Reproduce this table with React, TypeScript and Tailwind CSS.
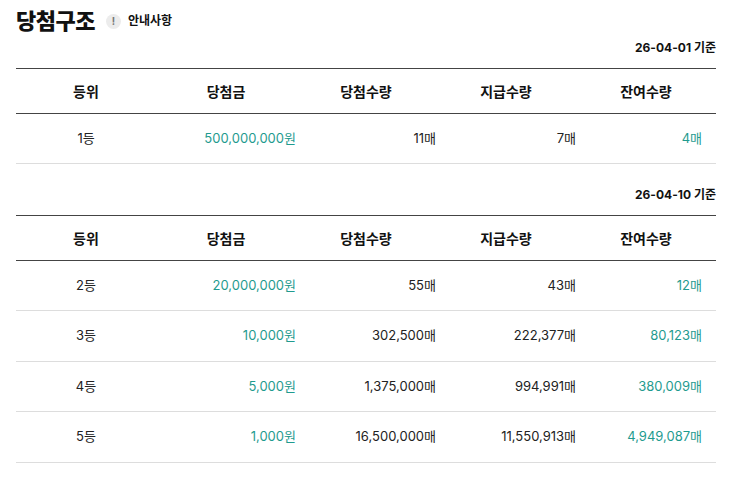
import React from "react";

const font = { fontFamily: "Inter, 'Noto Sans CJK KR', sans-serif" };

type Row = { rank: string; prize: string; win: string; paid: string; left: string };

const Table = ({ rows }: { rows: Row[] }) => (
  <div className="w-[700px]">
    <div className="grid grid-cols-5 h-[46px] items-center border-t border-b border-[#444] text-[14px] font-bold text-[#111]">
      <div className="text-center">등위</div>
      <div className="text-center">당첨금</div>
      <div className="text-center">당첨수량</div>
      <div className="text-center">지급수량</div>
      <div className="text-center">잔여수량</div>
    </div>
    {rows.map((r, i) => (
      <div
        key={r.rank}
        className={`grid grid-cols-5 items-center border-b border-[#dddddd] text-[13px] text-[#222] ${i % 2 === 1 ? "h-[51px]" : "h-[50px]"}`}
      >
        <div className="text-center">{r.rank}</div>
        <div className="text-right text-[#1f9b8f]">{r.prize}</div>
        <div className="text-right">{r.win}</div>
        <div className="text-right">{r.paid}</div>
        <div className="text-right pr-[14px] text-[#1f9b8f]">{r.left}</div>
      </div>
    ))}
  </div>
);

export default function App() {
  return (
    <div className="bg-white w-[734px] h-[486px] pl-[16px] pt-[6px]" style={font}>
      <div className="flex items-center h-[30px]">
        <span className="text-[22px] font-black text-[#111] tracking-[-0.5px]">당첨구조</span>
        <span className="ml-[11px] w-[15px] h-[15px] rounded-full bg-[#ececec] flex items-center justify-center text-[10px] font-bold text-[#777]">!</span>
        <span className="ml-[7px] text-[12px] font-semibold text-[#111]">안내사항</span>
      </div>
      <div className="w-[700px] text-right text-[12px] font-bold text-[#111] leading-[18px] mt-[3px] mb-[11px]">26-04-01 기준</div>
      <Table rows={[{ rank: "1등", prize: "500,000,000원", win: "11매", paid: "7매", left: "4매" }]} />
      <div className="w-[700px] text-right text-[12px] font-bold text-[#111] leading-[18px] mt-[22px] mb-[11px]">26-04-10 기준</div>
      <Table
        rows={[
          { rank: "2등", prize: "20,000,000원", win: "55매", paid: "43매", left: "12매" },
          { rank: "3등", prize: "10,000원", win: "302,500매", paid: "222,377매", left: "80,123매" },
          { rank: "4등", prize: "5,000원", win: "1,375,000매", paid: "994,991매", left: "380,009매" },
          { rank: "5등", prize: "1,000원", win: "16,500,000매", paid: "11,550,913매", left: "4,949,087매" },
        ]}
      />
    </div>
  );
}
